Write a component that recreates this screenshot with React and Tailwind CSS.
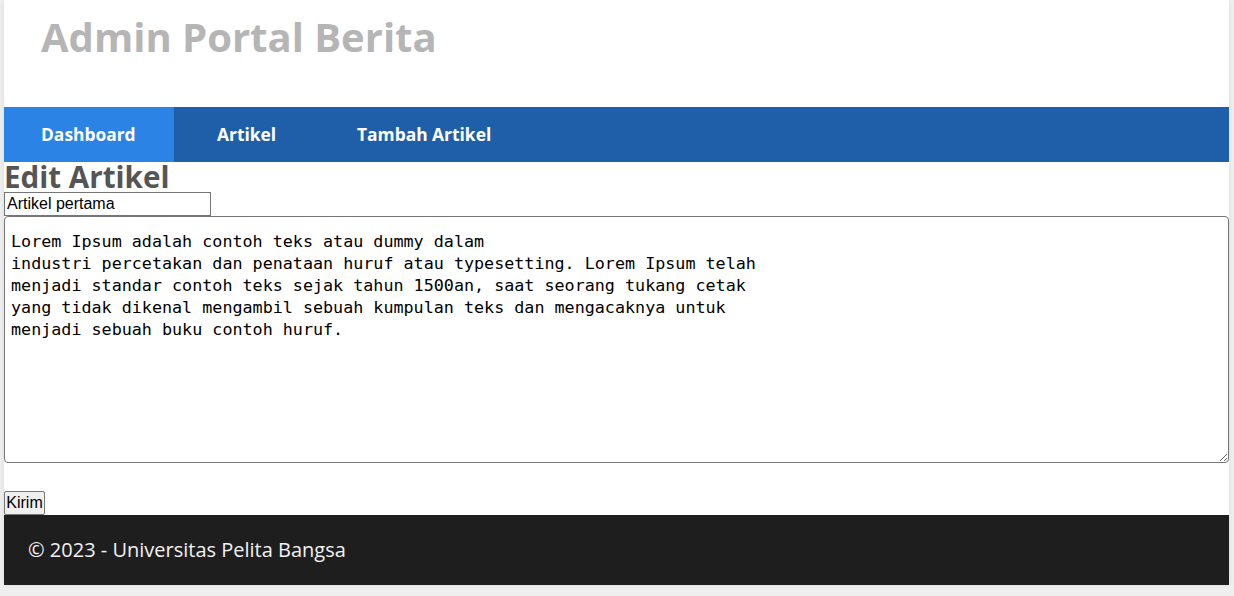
export default function App() {
  const isi = `Lorem Ipsum adalah contoh teks atau dummy dalam
industri percetakan dan penataan huruf atau typesetting. Lorem Ipsum telah
menjadi standar contoh teks sejak tahun 1500an, saat seorang tukang cetak
yang tidak dikenal mengambil sebuah kumpulan teks dan mengacaknya untuk
menjadi sebuah buku contoh huruf.`;

  return (
    <div className="min-h-[596px] bg-[#efefef] pb-[11px]">
      <div className="ml-[4px] mr-[5px] bg-white shadow-[0_0_6px_rgba(0,0,0,0.08)]">
        {/* header */}
        <header className="h-[107px] pl-[37px] pt-[9px]">
          <h1 className="font-['Open_Sans',sans-serif] text-[40px] font-bold leading-[55px] text-[#b5b5b5]">
            Admin Portal Berita
          </h1>
        </header>

        {/* menu */}
        <nav className="flex h-[55px] bg-[#1f5fa9] font-['Open_Sans',sans-serif] text-[17.4px] font-bold leading-[55px] text-white">
          <a href="#" className="w-[170px] bg-[#2b83e6] pl-[37px]">Dashboard</a>
          <a href="#" className="w-[145px] pl-[43px]">Artikel</a>
          <a href="#" className="pl-[38px] pr-[38px]">Tambah Artikel</a>
        </nav>

        {/* konten */}
        <section className="font-['Liberation_Sans',Arial,sans-serif]">
          <h2 className="font-['Open_Sans',sans-serif] text-[29.6px] font-bold leading-[30px] text-[#555555]">
            Edit Artikel
          </h2>
          <input
            type="text"
            defaultValue="Artikel pertama"
            className="block h-[24px] w-[207px] border border-[#767676] px-[2px] text-[16px] text-black outline-none"
          />
          <textarea
            defaultValue={isi}
            className="block h-[247px] w-full rounded-[4px] border border-[#767676] pl-[6px] pt-[13px] font-['DejaVu_Sans_Mono',monospace] text-[16.73px] leading-[22px] text-black outline-none"
          />
          <div className="h-[28px]" />
          <button className="block h-[24px] w-[41px] rounded-[2px] border border-[#767676] bg-[#efefef] text-[16px] leading-[20px] text-black">
            Kirim
          </button>
        </section>

        {/* footer */}
        <footer className="h-[70px] bg-[#1e1e1e] pl-[24px] font-['Open_Sans',sans-serif] text-[20px] leading-[70px] text-[#f2f2f2]">
          © 2023 - Universitas Pelita Bangsa
        </footer>
      </div>
    </div>
  );
}
